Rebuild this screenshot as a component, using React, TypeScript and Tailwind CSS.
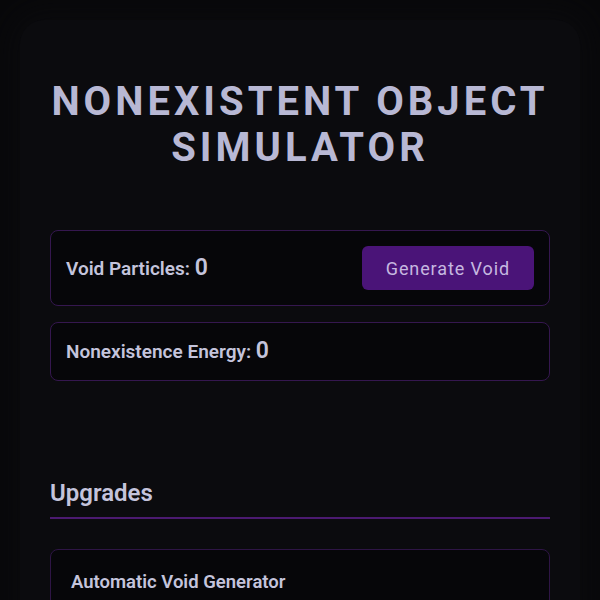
const App = () => {
  return (
    <div
      className="min-h-screen bg-[#08080a] p-5 text-[#c4c4dc]"
      style={{ fontFamily: "Roboto, 'Liberation Sans', sans-serif" }}
    >
      <div className="mx-auto max-w-[560px] rounded-3xl bg-[#0b0b0e] px-[30px] pt-7 pb-10 shadow-[0_0_30px_12px_rgba(11,11,14,0.7)]">
        <h1 className="mt-[31px] mb-[59px] text-center text-[40px] leading-[46px] font-bold tracking-[0.1em] text-[#b8b8d4]">
          NONEXISTENT OBJECT SIMULATOR
        </h1>

        <div className="flex flex-col gap-4">
          <div className="flex items-center justify-between rounded-lg border border-[#35174f] bg-[#060609] p-[15px]">
            <p className="text-[19px] leading-[26px] font-semibold">
              Void Particles: <span className="text-[23px]">0</span>
            </p>
            <button className="h-11 rounded-md bg-[#4a1478] px-[24px] text-[18px] tracking-[0.05em] text-[#c6b8e0]">
              Generate Void
            </button>
          </div>

          <div className="rounded-lg border border-[#35174f] bg-[#060609] p-[15px]">
            <p className="text-[19px] leading-[26px] font-semibold">
              Nonexistence Energy: <span className="text-[23px]">0</span>
            </p>
          </div>
        </div>

        <h2 className="mt-[96px] border-b-2 border-[#4b1a70] pb-2 text-[24px] leading-[32px] font-semibold">
          Upgrades
        </h2>

        <div className="mt-[30px] rounded-lg border border-[#2e1545] bg-[#060609] p-5 pb-10">
          <h3 className="text-[18.5px] leading-6 font-semibold">Automatic Void Generator</h3>
        </div>
      </div>
    </div>
  );
};

export default App;
